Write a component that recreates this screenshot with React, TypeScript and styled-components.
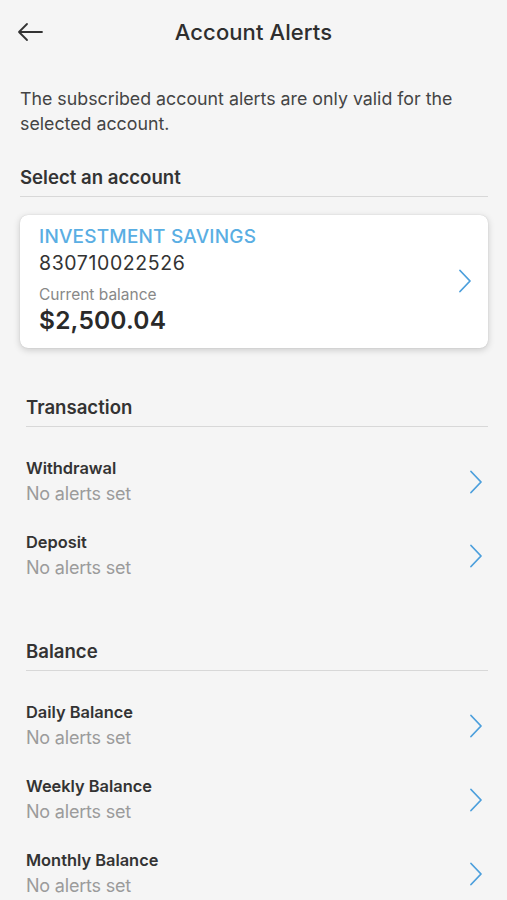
import styled, { createGlobalStyle } from 'styled-components';

const GlobalStyle = createGlobalStyle`
  html, body {
    margin: 0;
    padding: 0;
    background: #f5f5f5;
  }
  body {
    font-family: Inter, "Noto Sans", "Liberation Sans", sans-serif;
    color: #333;
    -webkit-font-smoothing: antialiased;
  }
`;

const Screen = styled.div`
  width: 507px;
  min-height: 900px;
  background: #f5f5f5;
  overflow: hidden;
`;

const Header = styled.header`
  position: relative;
  height: 64px;
  display: flex;
  align-items: center;
  justify-content: center;
`;

const BackButton = styled.button`
  position: absolute;
  left: 14px;
  top: 18px;
  width: 32px;
  height: 28px;
  padding: 0;
  border: 0;
  background: none;
  display: flex;
  align-items: center;
  justify-content: center;
  cursor: pointer;
`;

const Title = styled.h1`
  margin: 0;
  font-size: 22px;
  font-weight: 500;
  color: #2e2e2e;
  letter-spacing: 0.1px;
`;

const Intro = styled.p`
  margin: 22px 20px 0 20px;
  font-size: 17.8px;
  line-height: 25px;
  color: #444;
`;

const SectionHead = styled.div<{ $inset: number }>`
  margin: 0 19px 0 ${(p) => p.$inset}px;
  padding-bottom: 8px;
  border-bottom: 1.5px solid #d8d8d8;
  font-size: 18.6px;
  line-height: 22px;
  font-weight: 600;
  color: #333;
`;

const AccountCard = styled.div`
  margin: 18px 19px 0 20px;
  background: #fff;
  border-radius: 8px;
  box-shadow: 0 2px 7px rgba(0, 0, 0, 0.18), 0 0 1px rgba(0, 0, 0, 0.2);
  padding: 11px 16px 13px 19px;
  display: flex;
  align-items: center;
`;

const CardBody = styled.div`
  flex: 1;
  display: flex;
  flex-direction: column;
`;

const AccountName = styled.div`
  font-size: 19px;
  line-height: 22px;
  font-weight: 500;
  color: #5aaee3;
  letter-spacing: 0.2px;
`;

const AccountNumber = styled.div`
  font-size: 19.5px;
  line-height: 30px;
  color: #333;
  letter-spacing: 0.6px;
`;

const BalanceLabel = styled.div`
  margin-top: 7px;
  font-size: 15.5px;
  line-height: 20px;
  color: #888;
`;

const BalanceValue = styled.div`
  font-size: 24.5px;
  line-height: 30px;
  font-weight: 600;
  color: #2a2a2a;
  letter-spacing: 0.2px;
`;

const Section = styled.section<{ $top: number }>`
  margin-top: ${(p) => p.$top}px;
`;

const List = styled.div`
  margin: 29px 19px 0 26px;
  display: flex;
  flex-direction: column;
  gap: 23px;
`;

const Row = styled.div`
  display: flex;
  align-items: center;
  cursor: pointer;
`;

const RowText = styled.div`
  flex: 1;
  display: flex;
  flex-direction: column;
`;

const RowTitle = styled.div`
  font-size: 16.4px;
  line-height: 24px;
  font-weight: 600;
  color: #333;
`;

const RowSub = styled.div`
  font-size: 18px;
  line-height: 27px;
  color: #9b9b9b;
  letter-spacing: -0.2px;
`;

const ChevronBox = styled.div<{ $right: number }>`
  width: 14px;
  margin-right: ${(p) => p.$right}px;
  display: flex;
  align-items: center;
`;

function Chevron() {
  return (
    <svg width="14" height="26" viewBox="0 0 14 26" fill="none">
      <path d="M2 2.5 L12 13 L2 23.5" stroke="#4c9fdc" strokeWidth="1.8" strokeLinecap="round" strokeLinejoin="round" />
    </svg>
  );
}

function BackArrow() {
  return (
    <svg width="28" height="20" viewBox="0 0 28 20" fill="none">
      <path d="M3 10 H26 M11 2 L3 10 L11 18" stroke="#333" strokeWidth="1.8" strokeLinecap="round" strokeLinejoin="round" />
    </svg>
  );
}

const transactionAlerts = ['Withdrawal', 'Deposit'];
const balanceAlerts = ['Daily Balance', 'Weekly Balance', 'Monthly Balance'];

function AlertRow({ label }: { label: string }) {
  return (
    <Row>
      <RowText>
        <RowTitle>{label}</RowTitle>
        <RowSub>No alerts set</RowSub>
      </RowText>
      <ChevronBox $right={5}>
        <Chevron />
      </ChevronBox>
    </Row>
  );
}

export default function App() {
  return (
    <Screen>
      <GlobalStyle />
      <Header>
        <BackButton aria-label="Back">
          <BackArrow />
        </BackButton>
        <Title>Account Alerts</Title>
      </Header>

      <Intro>The subscribed account alerts are only valid for the selected account.</Intro>

      <Section $top={30}>
        <SectionHead $inset={20}>Select an account</SectionHead>
        <AccountCard>
          <CardBody>
            <AccountName>INVESTMENT SAVINGS</AccountName>
            <AccountNumber>830710022526</AccountNumber>
            <BalanceLabel>Current balance</BalanceLabel>
            <BalanceValue>$2,500.04</BalanceValue>
          </CardBody>
          <ChevronBox $right={0}>
            <Chevron />
          </ChevronBox>
        </AccountCard>
      </Section>

      <Section $top={48}>
        <SectionHead $inset={26}>Transaction</SectionHead>
        <List>
          {transactionAlerts.map((a) => (
            <AlertRow key={a} label={a} />
          ))}
        </List>
      </Section>

      <Section $top={59}>
        <SectionHead $inset={26}>Balance</SectionHead>
        <List>
          {balanceAlerts.map((a) => (
            <AlertRow key={a} label={a} />
          ))}
        </List>
      </Section>
    </Screen>
  );
}
